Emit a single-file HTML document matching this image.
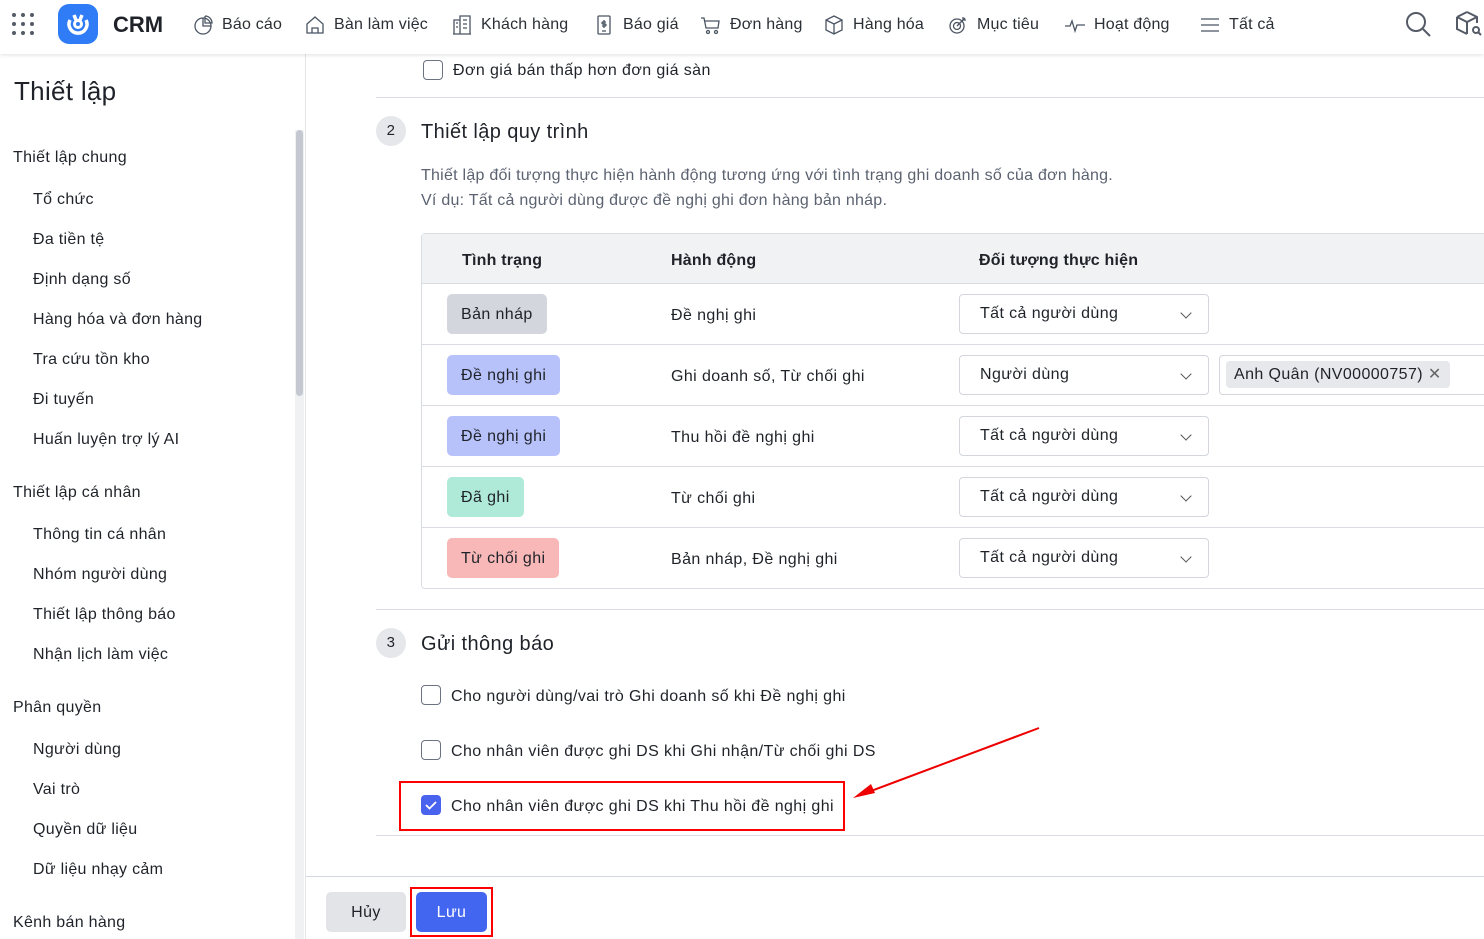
<!DOCTYPE html>
<html><head><meta charset="utf-8">
<style>
*{box-sizing:border-box;margin:0;padding:0}
body{width:1484px;height:939px;overflow:hidden;background:#fff;font-family:"Liberation Sans","Noto Sans CJK SC",sans-serif;color:#1f2329;position:relative;font-size:16px;letter-spacing:.4px}
.a{position:absolute;white-space:nowrap}
.t{margin-top:2px}
.top{position:absolute;left:0;top:0;width:1484px;height:54px;background:#fff;box-shadow:0 1px 4px rgba(0,0,0,.12);z-index:5}
.nav{position:absolute;top:14px;font-size:16px;color:#2b2f36;display:flex;align-items:center;gap:8px;letter-spacing:.2px}
.nav svg{width:22px;height:22px;stroke:#4b5563;fill:none;stroke-width:1.3}
.side a{position:absolute;left:33px;font-size:16px;color:#1f2329;white-space:nowrap;margin-top:2px;letter-spacing:.3px}
.side b{position:absolute;left:13px;font-size:16px;font-weight:normal;color:#1f2329;white-space:nowrap;margin-top:2px;letter-spacing:.3px}
.hl{position:absolute;height:1px;background:#d9dde3}
.circ{position:absolute;width:30px;height:30px;border-radius:50%;background:#e5e7eb;font-size:15px;text-align:center;line-height:30px}
.badge{position:absolute;left:447px;height:40px;border-radius:5px;padding:0 14px;line-height:42px;font-size:16px}
.sel{position:absolute;left:959px;width:250px;height:40px;border:1px solid #d3d6db;border-radius:4px;padding-left:20px;line-height:38px;font-size:16px}
.sel:after{content:"";position:absolute;right:18px;top:14px;width:7px;height:7px;border-right:1.3px solid #555;border-bottom:1.3px solid #555;transform:rotate(45deg)}
.cb{position:absolute;left:421px;width:20px;height:20px;border:1.5px solid #6b7280;border-radius:4px}
</style></head><body>
<div class="top">
  <svg class="a" style="left:11px;top:12px" width="24" height="24" viewBox="0 0 24 24" fill="#555b66"><circle cx="3" cy="3" r="2"/><circle cx="12" cy="3" r="2"/><circle cx="21" cy="3" r="2"/><circle cx="3" cy="12" r="2"/><circle cx="12" cy="12" r="2"/><circle cx="21" cy="12" r="2"/><circle cx="3" cy="21" r="2"/><circle cx="12" cy="21" r="2"/><circle cx="21" cy="21" r="2"/></svg>
  <div class="a" style="left:58px;top:4px;width:40px;height:40px;border-radius:11px;background:#2f7cf6"></div>
  <svg class="a" style="left:58px;top:4px" width="40" height="40" viewBox="0 0 40 40" fill="none" stroke="#fff" stroke-width="3.5"><path d="M12 16a9 9 0 1 0 16 0"/><circle cx="20" cy="20" r="3.5" stroke-width="3"/><path d="M16 11l2 5M24 11l-2 5"/></svg>
  <div class="a" style="left:113px;top:12px;font-size:22px;font-weight:bold;color:#1f2329;letter-spacing:0">CRM</div>
  <div class="nav" style="left:192px"><svg viewBox="0 0 22 22"><circle cx="11" cy="12" r="8"/><path d="M11 4v8h8M13 2v7h7a7 7 0 0 0-7-7"/></svg>Báo cáo</div>
  <div class="nav" style="left:304px"><svg viewBox="0 0 22 22"><path d="M3 10l8-7 8 7v9H3z M8 19v-5h6v5"/></svg>Bàn làm việc</div>
  <div class="nav" style="left:451px"><svg viewBox="0 0 22 22"><path d="M3 20V6h6v14M9 20V2h10v18M2 20h18M5 9h2M5 13h2M12 6h4M12 10h4M12 14h4"/></svg>Khách hàng</div>
  <div class="nav" style="left:593px"><svg viewBox="0 0 22 22"><rect x="5" y="2" width="12" height="18" rx="1"/><path d="M11 6v8M13 8h-3a1 1 0 0 0 0 2h2a1 1 0 0 1 0 2H9M9 17h4"/></svg>Báo giá</div>
  <div class="nav" style="left:700px"><svg viewBox="0 0 22 22"><path d="M1 4h3l2 10h12l1-7H5"/><circle cx="8" cy="18" r="1.5"/><circle cx="16" cy="18" r="1.5"/></svg>Đơn hàng</div>
  <div class="nav" style="left:823px"><svg viewBox="0 0 22 22"><path d="M11 2l8 4v10l-8 4-8-4V6z M3 6l8 4 8-4M11 10v10"/></svg>Hàng hóa</div>
  <div class="nav" style="left:947px"><svg viewBox="0 0 22 22"><circle cx="10" cy="12" r="7"/><circle cx="10" cy="12" r="3.5"/><path d="M10 12l8-8M16 3v3h3"/></svg>Mục tiêu</div>
  <div class="nav" style="left:1064px"><svg viewBox="0 0 22 22"><path d="M1 12h5l2-5 3 10 2-6h8"/></svg>Hoạt động</div>
  <div class="nav" style="left:1199px"><svg viewBox="0 0 22 22"><path d="M2 5h18M2 11h18M2 17h18"/></svg>Tất cả</div>
  <svg class="a" style="left:1404px;top:10px" width="28" height="28" viewBox="0 0 28 28" fill="none" stroke="#555b66" stroke-width="2"><circle cx="12" cy="12" r="9"/><path d="M19 19l7 7"/></svg>
  <svg class="a" style="left:1455px;top:10px" width="29" height="28" viewBox="0 0 29 28" fill="none" stroke="#555b66" stroke-width="2"><path d="M12 2l10 5v6M2 7l10-5M2 7v12l10 5M2 7l10 5 10-5M12 12v12"/><circle cx="21" cy="20" r="3"/><path d="M23 22l3 3"/></svg>
</div>

<div class="side">
  <div class="a" style="left:14px;top:76px;font-size:26px;letter-spacing:.3px">Thiết lập</div>
  <b style="top:147px">Thiết lập chung</b>
  <a style="top:189px">Tổ chức</a>
  <a style="top:229px">Đa tiền tệ</a>
  <a style="top:269px">Định dạng số</a>
  <a style="top:309px">Hàng hóa và đơn hàng</a>
  <a style="top:349px">Tra cứu tồn kho</a>
  <a style="top:389px">Đi tuyến</a>
  <a style="top:429px">Huấn luyện trợ lý AI</a>
  <b style="top:482px">Thiết lập cá nhân</b>
  <a style="top:524px">Thông tin cá nhân</a>
  <a style="top:564px">Nhóm người dùng</a>
  <a style="top:604px">Thiết lập thông báo</a>
  <a style="top:644px">Nhận lịch làm việc</a>
  <b style="top:697px">Phân quyền</b>
  <a style="top:739px">Người dùng</a>
  <a style="top:779px">Vai trò</a>
  <a style="top:819px">Quyền dữ liệu</a>
  <a style="top:859px">Dữ liệu nhạy cảm</a>
  <b style="top:912px">Kênh bán hàng</b>
</div>
<div class="a" style="left:295px;top:130px;width:9px;height:809px;background:#f0f1f3"></div>
<div class="a" style="left:296px;top:130px;width:7px;height:266px;border-radius:4px;background:#c4c8d0"></div>
<div class="a" style="left:305px;top:54px;width:1px;height:885px;background:#e3e5e8"></div>

<div class="cb" style="left:423px;top:60px;border-color:#6b7280"></div>
<div class="a t" style="left:453px;top:60px">Đơn giá bán thấp hơn đơn giá sàn</div>
<div class="hl" style="left:376px;top:97px;width:1108px"></div>

<div class="circ" style="left:376px;top:116px">2</div>
<div class="a t" style="left:421px;top:119px;font-size:20px">Thiết lập quy trình</div>
<div class="a t" style="left:421px;top:165px;color:#5b6270;letter-spacing:.25px">Thiết lập đối tượng thực hiện hành động tương ứng với tình trạng ghi doanh số của đơn hàng.</div>
<div class="a t" style="left:421px;top:190px;color:#5b6270;letter-spacing:.25px">Ví dụ: Tất cả người dùng được đề nghị ghi đơn hàng bản nháp.</div>

<div class="a" style="left:421px;top:233px;width:1080px;height:356px;border:1px solid #d9dde3;border-radius:4px"></div>
<div class="a" style="left:422px;top:234px;width:1070px;height:49px;background:#f1f2f4"></div>
<div class="hl" style="left:422px;top:283px;width:1062px"></div>
<div class="hl" style="left:422px;top:344px;width:1062px"></div>
<div class="hl" style="left:422px;top:405px;width:1062px"></div>
<div class="hl" style="left:422px;top:466px;width:1062px"></div>
<div class="hl" style="left:422px;top:527px;width:1062px"></div>
<div class="a t" style="left:462px;top:250px;font-weight:bold;letter-spacing:.2px">Tình trạng</div>
<div class="a t" style="left:671px;top:250px;font-weight:bold;letter-spacing:.2px">Hành động</div>
<div class="a t" style="left:979px;top:250px;font-weight:bold;letter-spacing:.2px">Đối tượng thực hiện</div>

<div class="badge" style="top:294px;background:#d3d7dd">Bản nháp</div>
<div class="a t" style="left:671px;top:305px">Đề nghị ghi</div>
<div class="sel" style="top:294px">Tất cả người dùng</div>

<div class="badge" style="top:355px;background:#b8c2fa">Đề nghị ghi</div>
<div class="a t" style="left:671px;top:366px">Ghi doanh số, Từ chối ghi</div>
<div class="sel" style="top:355px">Người dùng</div>
<div class="a" style="left:1219px;top:355px;width:280px;height:40px;border:1px solid #d3d6db;border-radius:4px"></div>
<div class="a" style="left:1226px;top:361px;height:27px;padding:0 8px;line-height:28px;border-radius:4px;background:#e6e8ec">Anh Quân (NV00000757) <span style="color:#666">✕</span></div>

<div class="badge" style="top:416px;background:#b8c2fa">Đề nghị ghi</div>
<div class="a t" style="left:671px;top:427px">Thu hồi đề nghị ghi</div>
<div class="sel" style="top:416px">Tất cả người dùng</div>

<div class="badge" style="top:477px;background:#afe9d8">Đã ghi</div>
<div class="a t" style="left:671px;top:488px">Từ chối ghi</div>
<div class="sel" style="top:477px">Tất cả người dùng</div>

<div class="badge" style="top:538px;background:#f8b8b8">Từ chối ghi</div>
<div class="a t" style="left:671px;top:549px">Bản nháp, Đề nghị ghi</div>
<div class="sel" style="top:538px">Tất cả người dùng</div>

<div class="hl" style="left:376px;top:609px;width:1108px"></div>
<div class="circ" style="left:376px;top:628px">3</div>
<div class="a t" style="left:421px;top:631px;font-size:20px">Gửi thông báo</div>

<div class="cb" style="top:685px"></div>
<div class="a t" style="left:451px;top:686px">Cho người dùng/vai trò Ghi doanh số khi Đề nghị ghi</div>
<div class="cb" style="top:740px"></div>
<div class="a t" style="left:451px;top:741px">Cho nhân viên được ghi DS khi Ghi nhận/Từ chối ghi DS</div>
<div class="a" style="left:421px;top:795px;width:20px;height:20px;border-radius:4px;background:#4a63ee"></div>
<svg class="a" style="left:421px;top:795px" width="20" height="20" viewBox="0 0 20 20" fill="none" stroke="#fff" stroke-width="1.8"><path d="M5 10l3.5 3.5L15 7"/></svg>
<div class="a t" style="left:451px;top:796px">Cho nhân viên được ghi DS khi Thu hồi đề nghị ghi</div>
<div class="a" style="left:399px;top:781px;width:446px;height:50px;border:2px solid #f00"></div>
<svg class="a" style="left:845px;top:722px" width="200" height="80" viewBox="0 0 200 80"><path d="M194 6L18 72" stroke="#e00" stroke-width="2"/><path d="M8 76l18-14 4 9z" fill="#e00"/></svg>
<div class="hl" style="left:376px;top:835px;width:1108px"></div>

<div class="hl" style="left:306px;top:876px;width:1178px;background:#d3d8e0"></div>
<div class="a" style="left:326px;top:892px;width:80px;height:40px;border-radius:5px;background:#e3e4e8;text-align:center;line-height:42px">Hủy</div>
<div class="a" style="left:410px;top:887px;width:83px;height:50px;border:2px solid #f00"></div>
<div class="a" style="left:416px;top:892px;width:71px;height:40px;border-radius:5px;background:#4366f1;color:#fff;text-align:center;line-height:42px">Lưu</div>
</body></html>
